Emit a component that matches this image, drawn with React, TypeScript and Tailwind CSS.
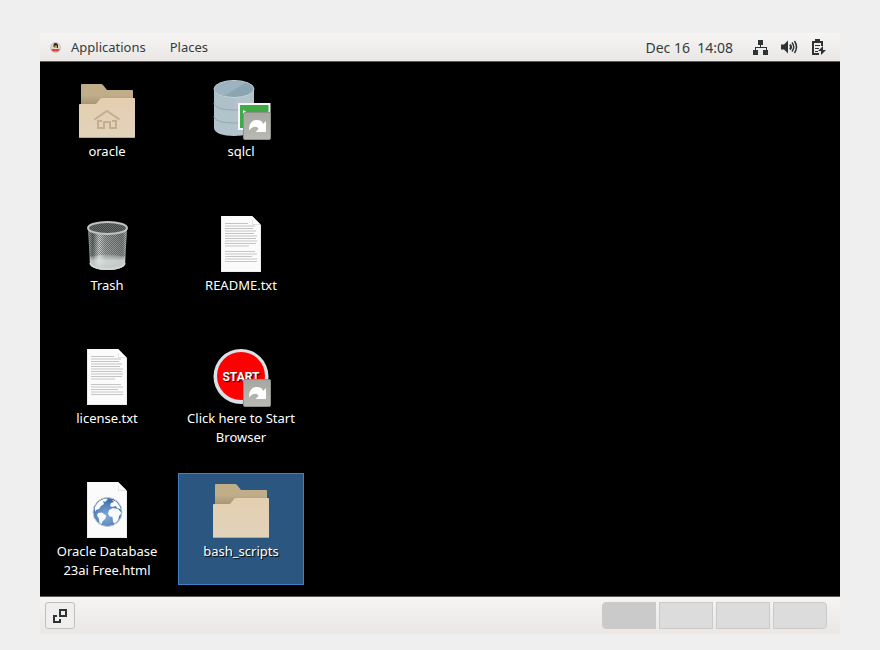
import React, { useState } from "react";

function Folder({ home = false }: { home?: boolean }) {
  const id = home ? "fh" : "fp";
  return (
    <svg width="64" height="64" viewBox="0 0 64 64" aria-hidden="true">
      <defs>
        <linearGradient id={id + "b"} x1="0" y1="0" x2="0" y2="1">
          <stop offset="0" stopColor="#c0ae88" />
          <stop offset="0.3" stopColor="#c0ae8a" />
          <stop offset="0.55" stopColor="#a89470" />
        </linearGradient>
        <linearGradient id={id + "f"} x1="0" y1="0" x2="0" y2="1">
          <stop offset="0" stopColor="#e5ceb1" />
          <stop offset="1" stopColor="#e1d3bb" />
        </linearGradient>
      </defs>
      <path d="M6 7q0-1 1-1h19q1 0 2 1l4 5h25q1 0 1 1v30H6z" fill={`url(#${id}b)`} />
      <path d="M4 27q0-1 1-1h15q1 0 2-1l3-4q1-1 2-1h32q1 0 1 1v38q0 1-1 1H5q-1 0-1-1z" fill={`url(#${id}f)`} />
      <path d="M5 59.5h54" stroke="#b7a78d" />
      {home && (
        <g fill="none" stroke="#c4ae8c" strokeWidth="2">
          <path d="M19.500 41.500L32 33l12.500 8.500" />
          <path d="M27 43h-4v7h6v-6h6v6h6v-7h-4" />
        </g>
      )}
    </svg>
  );
}

function Shortcut() {
  return (
    <g>
      <defs>
        <linearGradient id="sc" x1="0" y1="0" x2="0" y2="1">
          <stop offset="0" stopColor="#a6a7a1" />
          <stop offset="1" stopColor="#b9bab3" />
        </linearGradient>
      </defs>
      <rect x="34.500" y="34.500" width="27" height="27" rx="1.500" fill="url(#sc)" stroke="#8e8f89" />
      <path d="M40 52.500c0-7 3-10.500 7.500-10.500 4 0 6 1.500 6.500 4l3-3v11H46.500l3-3c-1-3.500-6.500-3-9.500 1.500z" fill="#fff" />
    </g>
  );
}

function Database() {
  return (
    <svg width="64" height="64" viewBox="0 0 64 64" aria-hidden="true">
      <path d="M5 11v39c0 5 9 8 20 8s20-3 20-8V11z" fill="#b3c3cc" />
      <path d="M5 10v15c0 5 9 7 20 7V16z" fill="#afc0c9" />
      <ellipse cx="25" cy="11" rx="20" ry="8.500" fill="#8ba5b2" stroke="#c5d2d9" />
      <path d="M37 4.500L15 18Q5 15 5.500 11C6 5 18 3 25 3q7 0 12 1.500z" fill="#9cb4bf" />
      <g fill="none" stroke="#8fa9b8">
        <path d="M5 25c0 5 9 7 20 7s20-2 20-7" />
        <path d="M5 38c0 5 9 7 20 7s20-2 20-7" />
      </g>
      <rect x="30" y="26" width="30.500" height="25" fill="#42a948" stroke="#f4f7f5" strokeWidth="2" />
      <path d="M34 32l5 3-5 3" fill="#fff" />
      <Shortcut />
    </svg>
  );
}

function Trash() {
  return (
    <svg width="64" height="64" viewBox="0 0 64 64" aria-hidden="true">
      <defs>
        <linearGradient id="tb">
          <stop offset="0" stopColor="#a2a9a7" />
          <stop offset="0.120" stopColor="#5a6260" />
          <stop offset="0.280" stopColor="#c9cecc" />
          <stop offset="0.450" stopColor="#969b99" />
          <stop offset="0.880" stopColor="#7b807e" />
          <stop offset="1" stopColor="#b7bbb9" />
        </linearGradient>
        <linearGradient id="tf" x1="0" y1="0" x2="0" y2="1">
          <stop offset="0" stopColor="#fff" stopOpacity="0" />
          <stop offset="0.650" stopColor="#e6ecea" stopOpacity="0.100" />
          <stop offset="0.780" stopColor="#e6ecea" stopOpacity="0.700" />
          <stop offset="1" stopColor="#c5cbc9" stopOpacity="0.900" />
        </linearGradient>
        <pattern id="mesh" width="2" height="2" patternUnits="userSpaceOnUse">
          <path d="M0 0h1v1H0zM1 1h1v1H1z" fill="#202423" opacity="0.450" />
        </pattern>
      </defs>
      <path d="M13 16l2 36c1 4 9 6 17.500 6S49 56 50 52l2-36z" fill="url(#tb)" />
      <path d="M13 16l2 29q17-5 35 0l2-29z" fill="url(#mesh)" />
      <path d="M13 16l2 36c1 4 9 6 17.500 6S49 56 50 52l2-36z" fill="url(#tf)" />
      <path d="M15 51c1 4 9 6 17.500 6S49 55 50 51" fill="none" stroke="#d6dad8" strokeWidth="1.500" />
      <ellipse cx="32.500" cy="16" rx="19.500" ry="6" fill="#666b69" />
      <ellipse cx="32.500" cy="16" rx="19.500" ry="6" fill="url(#mesh)" stroke="#bfc3c1" strokeWidth="2" />
    </svg>
  );
}

const LINES = [23, 30, 28, 31, 29, 32, 31, 32, 31, 24];
const LINES_BELOW = [30, 32, 27, 32, 32];

function Page({ children }: { children?: React.ReactNode }) {
  return (
    <svg width="64" height="64" viewBox="0 0 64 64" aria-hidden="true">
      <path d="M12 4h31l9 9v47H12z" fill="#fbfbfb" />
      <path d="M43 12.500h8.500L43 4z" fill="#fff" />
      <path d="M43.500 8v4.500H51" fill="none" stroke="#e2e2e2" />
      <path d="M12.500 4v55.500h39V13" fill="none" stroke="#ececec" />
      {children}
    </svg>
  );
}

function TextFile() {
  return (
    <Page>
      {LINES.map((w, i) => (
        <path key={i} d={`M16 ${11.5 + i * 2.5}h${w}`} stroke="#c3c3c3" />
      ))}
      {LINES_BELOW.map((w, i) => (
        <path key={i} d={`M16 ${39.5 + i * 2.5}h${w}`} stroke="#c6c6c6" />
      ))}
    </Page>
  );
}

function WebFile() {
  return (
    <Page>
      <defs>
        <radialGradient id="gl" cx="0.450" cy="0.650" r="0.650">
          <stop offset="0" stopColor="#83acd9" />
          <stop offset="1" stopColor="#3767a5" />
        </radialGradient>
        <clipPath id="gc"><circle cx="32.500" cy="34" r="13.500" /></clipPath>
      </defs>
      <circle cx="32.500" cy="34" r="14.500" fill="url(#gl)" stroke="#c6cbd1" />
      <g clipPath="url(#gc)" fill="#f8fafb">
        <path d="M19 30l2-5 4-3 6-2 2 1-3 3-2-1 1 3-3 2-2 3-3 1v2z" />
        <path d="M23 35l4-.5 4 3-.5 3-3 3-1 3-2-1-.5-5-2-3z" />
        <path d="M37 22l4 1 4 5 2 5-2-2-3-1-1-2-4 1-2-1 1-3 3-1z" />
        <path d="M34 32l4-2 5 1 4 4-3 3-1 6-3 2-2-2-.5-5-3-.5-1.500-3z" />
      </g>
    </Page>
  );
}

function Start() {
  return (
    <svg width="64" height="64" viewBox="0 0 64 64" aria-hidden="true">
      <circle cx="32" cy="31.500" r="27.500" fill="#d9e2e8" />
      <circle cx="32" cy="31" r="24" fill="#fe0000" />
      <text x="32" y="36" textAnchor="middle" className="fill-white font-[Roboto,sans-serif] text-[12px] font-bold">START</text>
      <Shortcut />
    </svg>
  );
}

const ITEMS: { name: string; icon: React.ReactNode }[] = [
  { name: "oracle", icon: <Folder home /> },
  { name: "Trash", icon: <Trash /> },
  { name: "license.txt", icon: <TextFile /> },
  { name: "Oracle Database 23ai Free.html", icon: <WebFile /> },
  { name: "sqlcl", icon: <Database /> },
  { name: "README.txt", icon: <TextFile /> },
  { name: "Click here to Start Browser", icon: <Start /> },
  { name: "bash_scripts", icon: <Folder /> },
];

function TopBar() {
  return (
    <header className="flex h-[29px] items-center border-b border-[#5b6056] bg-linear-to-b from-[#f6f5f3] to-[#eae7e5] pr-[13px] pl-[10px]">
      <button className="flex items-center gap-[10px]">
        <svg width="11" height="11" viewBox="0 0 11 11" aria-hidden="true">
          <circle cx="5.500" cy="5.500" r="5" fill="#d8d8d6" stroke="#aaa" strokeWidth="0.500" />
          <path d="M3.500 5V3q0-2 2-2t2.500 2v3z" fill="#292725" />
          <path d="M4.500 3.500h2.500V6H4.500z" fill="#d39b48" />
          <path d="M1 7.500L3 7h5l2 .5L8 9.500H3z" fill="#e33f35" />
          <path d="M4 6h3l-1 1.500z" fill="#f3d9ce" />
        </svg>
        Applications
      </button>
      <button className="ml-6">Places</button>
      <button className="ml-auto text-[14px] whitespace-pre">Dec 16  14:08</button>
      <button aria-label="System menu" className="ml-5 flex items-center gap-3 text-[#2e3436]">
        <svg width="16" height="16" viewBox="0 0 16 16" fill="currentColor" aria-hidden="true">
          <path d="M5 1h5v5H8v2h6v3h1v5h-5v-5h3V9H3v2h2v5H0v-5h2V8h5V6H5z" />
        </svg>
        <svg width="17" height="16" viewBox="0 0 17 16" aria-hidden="true">
          <path d="M0 5.500h3l4-4v13l-4-4H0z" fill="currentColor" />
          <path d="M9 5.500q2 2.500 0 5" fill="none" stroke="currentColor" strokeWidth="2" />
          <path d="M11 3.500q3.500 4.500 0 9M13.500 2q4 6 0 12" fill="none" stroke="currentColor" strokeWidth="1.500" />
        </svg>
        <svg width="17" height="16" viewBox="0 0 17 16" aria-hidden="true">
          <path d="M9 15H3V3h9v4" fill="none" stroke="currentColor" strokeWidth="2" />
          <path d="M5 0h5v3H5z" fill="currentColor" />
          <path d="M5 6.500h5M5 9.500h4M5 12.500h3" stroke="currentColor" />
          <path d="M13 7l-5 5h3v4l5-5h-3z" fill="currentColor" />
        </svg>
      </button>
    </header>
  );
}

function Taskbar() {
  const [space, setSpace] = useState(0);
  return (
    <footer className="flex h-[38px] items-start justify-between border-t border-[#5a5553] bg-linear-to-b from-[#f6f5f3] to-[#eae7e5] pt-[5px] pr-[13px] pl-[5px]">
      <button aria-label="Show desktop" className="flex h-[27px] w-[30px] items-center justify-center rounded-[3px] border border-[#bfbfbf] bg-[#f0efee]">
        <svg width="14" height="14" viewBox="0 0 14 14" fill="none" stroke="#2e3436" strokeWidth="2" aria-hidden="true">
          <path d="M7 1h6v6H7z" />
          <path d="M4 7H1v6h6v-3" />
        </svg>
      </button>
      <nav aria-label="Workspaces" className="flex gap-[3px]">
        {[0, 1, 2, 3].map((n) => (
          <button
            key={n}
            aria-label={`Workspace ${n + 1}`}
            onClick={() => setSpace(n)}
            className={`h-[27px] w-[54px] border border-[#cacaca] first:rounded-l-[4px] last:rounded-r-[4px] ${n === space ? "bg-[#cacaca]" : "bg-[#dcdcdc]"}`}
          />
        ))}
      </nav>
    </footer>
  );
}

export default function App() {
  const [selected, setSelected] = useState("bash_scripts");
  return (
    <div className="min-h-screen bg-[#efefef] px-10 pt-[33px] pb-4 font-['Noto_Sans',sans-serif] text-[13px] leading-[19px] text-[#363b3d]">
      <TopBar />
      <main className="grid grid-flow-col auto-cols-[126px] grid-rows-[113px_repeat(3,112px)] items-start gap-x-2 gap-y-[21px] bg-black px-1 py-[11px]">
        {ITEMS.map(({ name, icon }) => (
          <button
            key={name}
            onClick={() => setSelected(name)}
            className={`flex h-[112px] flex-col items-center justify-start border px-1 pt-1 text-white [text-shadow:1px_1px_1px_#000] ${name === selected ? "border-[#4080c8] bg-[#2b567f]" : "border-transparent"}`}
          >
            {icon}
            <span>{name}</span>
          </button>
        ))}
      </main>
      <Taskbar />
    </div>
  );
}
